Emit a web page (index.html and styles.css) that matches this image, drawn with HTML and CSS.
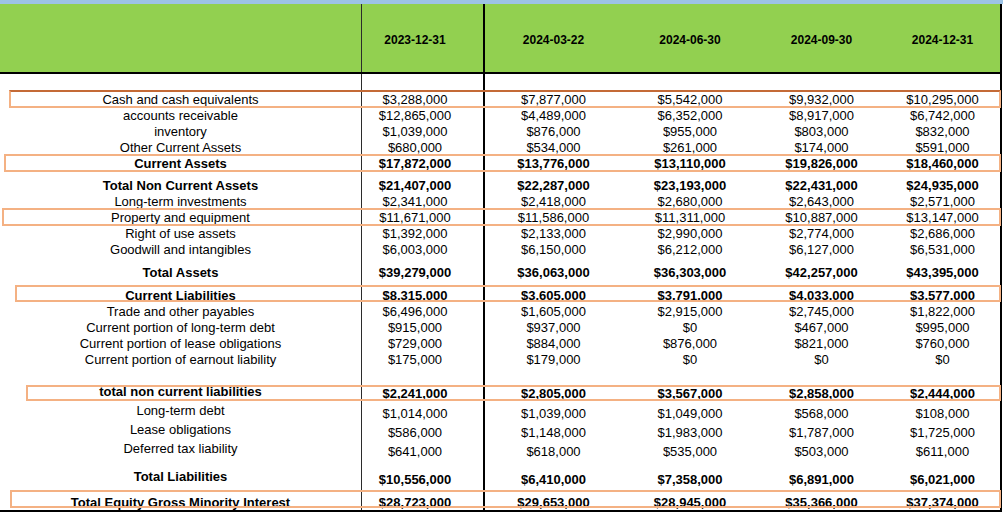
FILE: index.html
```html
<!DOCTYPE html>
<html>
<head>
<meta charset="utf-8">
<link rel="stylesheet" href="styles.css">
</head>
<body>
<div class="sheet">
  <div class="topstrip"></div>
  <div class="row head">
    <div class="c c0"></div>
    <div class="c c1">2023-12-31</div>
    <div class="c c2">2024-03-22</div>
    <div class="c c3">2024-06-30</div>
    <div class="c c4">2024-09-30</div>
    <div class="c c5">2024-12-31</div>
  </div>
  <div class="hline"></div>
  <div class="row h17"><div class="c c0"></div><div class="c c1"></div><div class="c c2"></div><div class="c c3"></div><div class="c c4"></div><div class="c c5"></div></div>

  <div class="row h16"><div class="c c0">Cash and cash equivalents</div><div class="c c1">$3,288,000</div><div class="c c2">$7,877,000</div><div class="c c3">$5,542,000</div><div class="c c4">$9,932,000</div><div class="c c5">$10,295,000</div></div>
  <div class="row h16"><div class="c c0">accounts receivable</div><div class="c c1">$12,865,000</div><div class="c c2">$4,489,000</div><div class="c c3">$6,352,000</div><div class="c c4">$8,917,000</div><div class="c c5">$6,742,000</div></div>
  <div class="row h16"><div class="c c0">inventory</div><div class="c c1">$1,039,000</div><div class="c c2">$876,000</div><div class="c c3">$955,000</div><div class="c c4">$803,000</div><div class="c c5">$832,000</div></div>
  <div class="row h16"><div class="c c0">Other Current Assets</div><div class="c c1">$680,000</div><div class="c c2">$534,000</div><div class="c c3">$261,000</div><div class="c c4">$174,000</div><div class="c c5">$591,000</div></div>
  <div class="row h16 bold"><div class="c c0">Current Assets</div><div class="c c1">$17,872,000</div><div class="c c2">$13,776,000</div><div class="c c3">$13,110,000</div><div class="c c4">$19,826,000</div><div class="c c5">$18,460,000</div></div>

  <div class="row h22 bold"><div class="c c0">Total Non Current Assets</div><div class="c c1">$21,407,000</div><div class="c c2">$22,287,000</div><div class="c c3">$23,193,000</div><div class="c c4">$22,431,000</div><div class="c c5">$24,935,000</div></div>
  <div class="row h16"><div class="c c0">Long-term investments</div><div class="c c1">$2,341,000</div><div class="c c2">$2,418,000</div><div class="c c3">$2,680,000</div><div class="c c4">$2,643,000</div><div class="c c5">$2,571,000</div></div>
  <div class="row h16"><div class="c c0">Property and equipment</div><div class="c c1">$11,671,000</div><div class="c c2">$11,586,000</div><div class="c c3">$11,311,000</div><div class="c c4">$10,887,000</div><div class="c c5">$13,147,000</div></div>
  <div class="row h16"><div class="c c0">Right of use assets</div><div class="c c1">$1,392,000</div><div class="c c2">$2,133,000</div><div class="c c3">$2,990,000</div><div class="c c4">$2,774,000</div><div class="c c5">$2,686,000</div></div>
  <div class="row h16"><div class="c c0">Goodwill and intangibles</div><div class="c c1">$6,003,000</div><div class="c c2">$6,150,000</div><div class="c c3">$6,212,000</div><div class="c c4">$6,127,000</div><div class="c c5">$6,531,000</div></div>
  <div class="row h23 bold"><div class="c c0">Total Assets</div><div class="c c1">$39,279,000</div><div class="c c2">$36,063,000</div><div class="c c3">$36,303,000</div><div class="c c4">$42,257,000</div><div class="c c5">$43,395,000</div></div>

  <div class="row h23 bold"><div class="c c0">Current Liabilities</div><div class="c c1">$8,315,000</div><div class="c c2">$3,605,000</div><div class="c c3">$3,791,000</div><div class="c c4">$4,033,000</div><div class="c c5">$3,577,000</div></div>
  <div class="row h16"><div class="c c0">Trade and other payables</div><div class="c c1">$6,496,000</div><div class="c c2">$1,605,000</div><div class="c c3">$2,915,000</div><div class="c c4">$2,745,000</div><div class="c c5">$1,822,000</div></div>
  <div class="row h16"><div class="c c0">Current portion of long-term debt</div><div class="c c1">$915,000</div><div class="c c2">$937,000</div><div class="c c3">$0</div><div class="c c4">$467,000</div><div class="c c5">$995,000</div></div>
  <div class="row h16"><div class="c c0">Current portion of lease obligations</div><div class="c c1">$729,000</div><div class="c c2">$884,000</div><div class="c c3">$876,000</div><div class="c c4">$821,000</div><div class="c c5">$760,000</div></div>
  <div class="row h16"><div class="c c0">Current portion of earnout liability</div><div class="c c1">$175,000</div><div class="c c2">$179,000</div><div class="c c3">$0</div><div class="c c4">$0</div><div class="c c5">$0</div></div>

  <div class="row h34 bold lift2"><div class="c c0">total non current liabilities</div><div class="c c1">$2,241,000</div><div class="c c2">$2,805,000</div><div class="c c3">$3,567,000</div><div class="c c4">$2,858,000</div><div class="c c5">$2,444,000</div></div>
  <div class="row h20 lift3"><div class="c c0">Long-term debt</div><div class="c c1">$1,014,000</div><div class="c c2">$1,039,000</div><div class="c c3">$1,049,000</div><div class="c c4">$568,000</div><div class="c c5">$108,000</div></div>
  <div class="row h19 lift3"><div class="c c0">Lease obligations</div><div class="c c1">$586,000</div><div class="c c2">$1,148,000</div><div class="c c3">$1,983,000</div><div class="c c4">$1,787,000</div><div class="c c5">$1,725,000</div></div>
  <div class="row h19 lift3"><div class="c c0">Deferred tax liability</div><div class="c c1">$641,000</div><div class="c c2">$618,000</div><div class="c c3">$535,000</div><div class="c c4">$503,000</div><div class="c c5">$611,000</div></div>
  <div class="row h28 bold lift3"><div class="c c0">Total Liabilities</div><div class="c c1">$10,556,000</div><div class="c c2">$6,410,000</div><div class="c c3">$7,358,000</div><div class="c c4">$6,891,000</div><div class="c c5">$6,021,000</div></div>
  <div class="row h23 bold"><div class="c c0">Total Equity Gross Minority Interest</div><div class="c c1">$28,723,000</div><div class="c c2">$29,653,000</div><div class="c c3">$28,945,000</div><div class="c c4">$35,366,000</div><div class="c c5">$37,374,000</div></div>
  <div class="hline"></div>

  <div class="mark m1"></div>
  <div class="mark m2"></div>
  <div class="mark m3"></div>
  <div class="mark m4"></div>
  <div class="mark m5"></div>
  <div class="mark m6"></div>
</div>
</body>
</html>
```

FILE: styles.css
```css
html, body {
  margin: 0;
  padding: 0;
  background: #ffffff;
}

.sheet {
  position: relative;
  width: 1003px;
  height: 513px;
  overflow: hidden;
  font-family: "Liberation Sans", Arial, sans-serif;
  font-size: 13px;
  color: #000;
}

.topstrip {
  height: 4px;
  background: #9dc3e6;
}

.hline {
  height: 2px;
  width: 1002px;
  background: #000;
}

.row {
  display: grid;
  grid-template-columns: 362px 123px 137px 136px 127px 117px;
  width: 1002px;
}

.c {
  box-sizing: border-box;
  display: flex;
  align-items: flex-end;
  justify-content: center;
  line-height: 14px;
  white-space: nowrap;
}

.c0 { border-right: 1px solid #2b2b2b; }
.c1 { border-right: 2px solid #000; padding-right: 15px; }
.c5 { border-right: 2px solid #000; }

.head {
  height: 68px;
  background: #92d050;
  font-weight: bold;
  font-size: 12px;
}
.head .c {
  align-items: center;
  padding-top: 4px;
}

.h16 { height: 16px; }
.h17 { height: 17px; }
.h19 { height: 19px; }
.h20 { height: 20px; }
.h22 { height: 22px; }
.h23 { height: 23px; }
.h28 { height: 28px; }
.h34 { height: 34px; }

.bold { font-weight: bold; }

.lift2 .c0 { padding-bottom: 2px; }
.lift3 .c0 { padding-bottom: 3px; }

.mark {
  position: absolute;
  box-sizing: border-box;
  border: 2px solid #f4b183;
  right: 2px;
}
.m1 { left: 9px; top: 90px; height: 18px; border-top-color: #c46a36; }
.m2 { left: 4px; top: 154px; height: 18px; }
.m3 { left: 2px; top: 208px; height: 18px; }
.m4 { left: 15px; top: 285px; height: 17px; }
.m5 { left: 26px; top: 385px; height: 16px; }
.m6 { left: 10px; top: 490px; height: 18px; }
```
